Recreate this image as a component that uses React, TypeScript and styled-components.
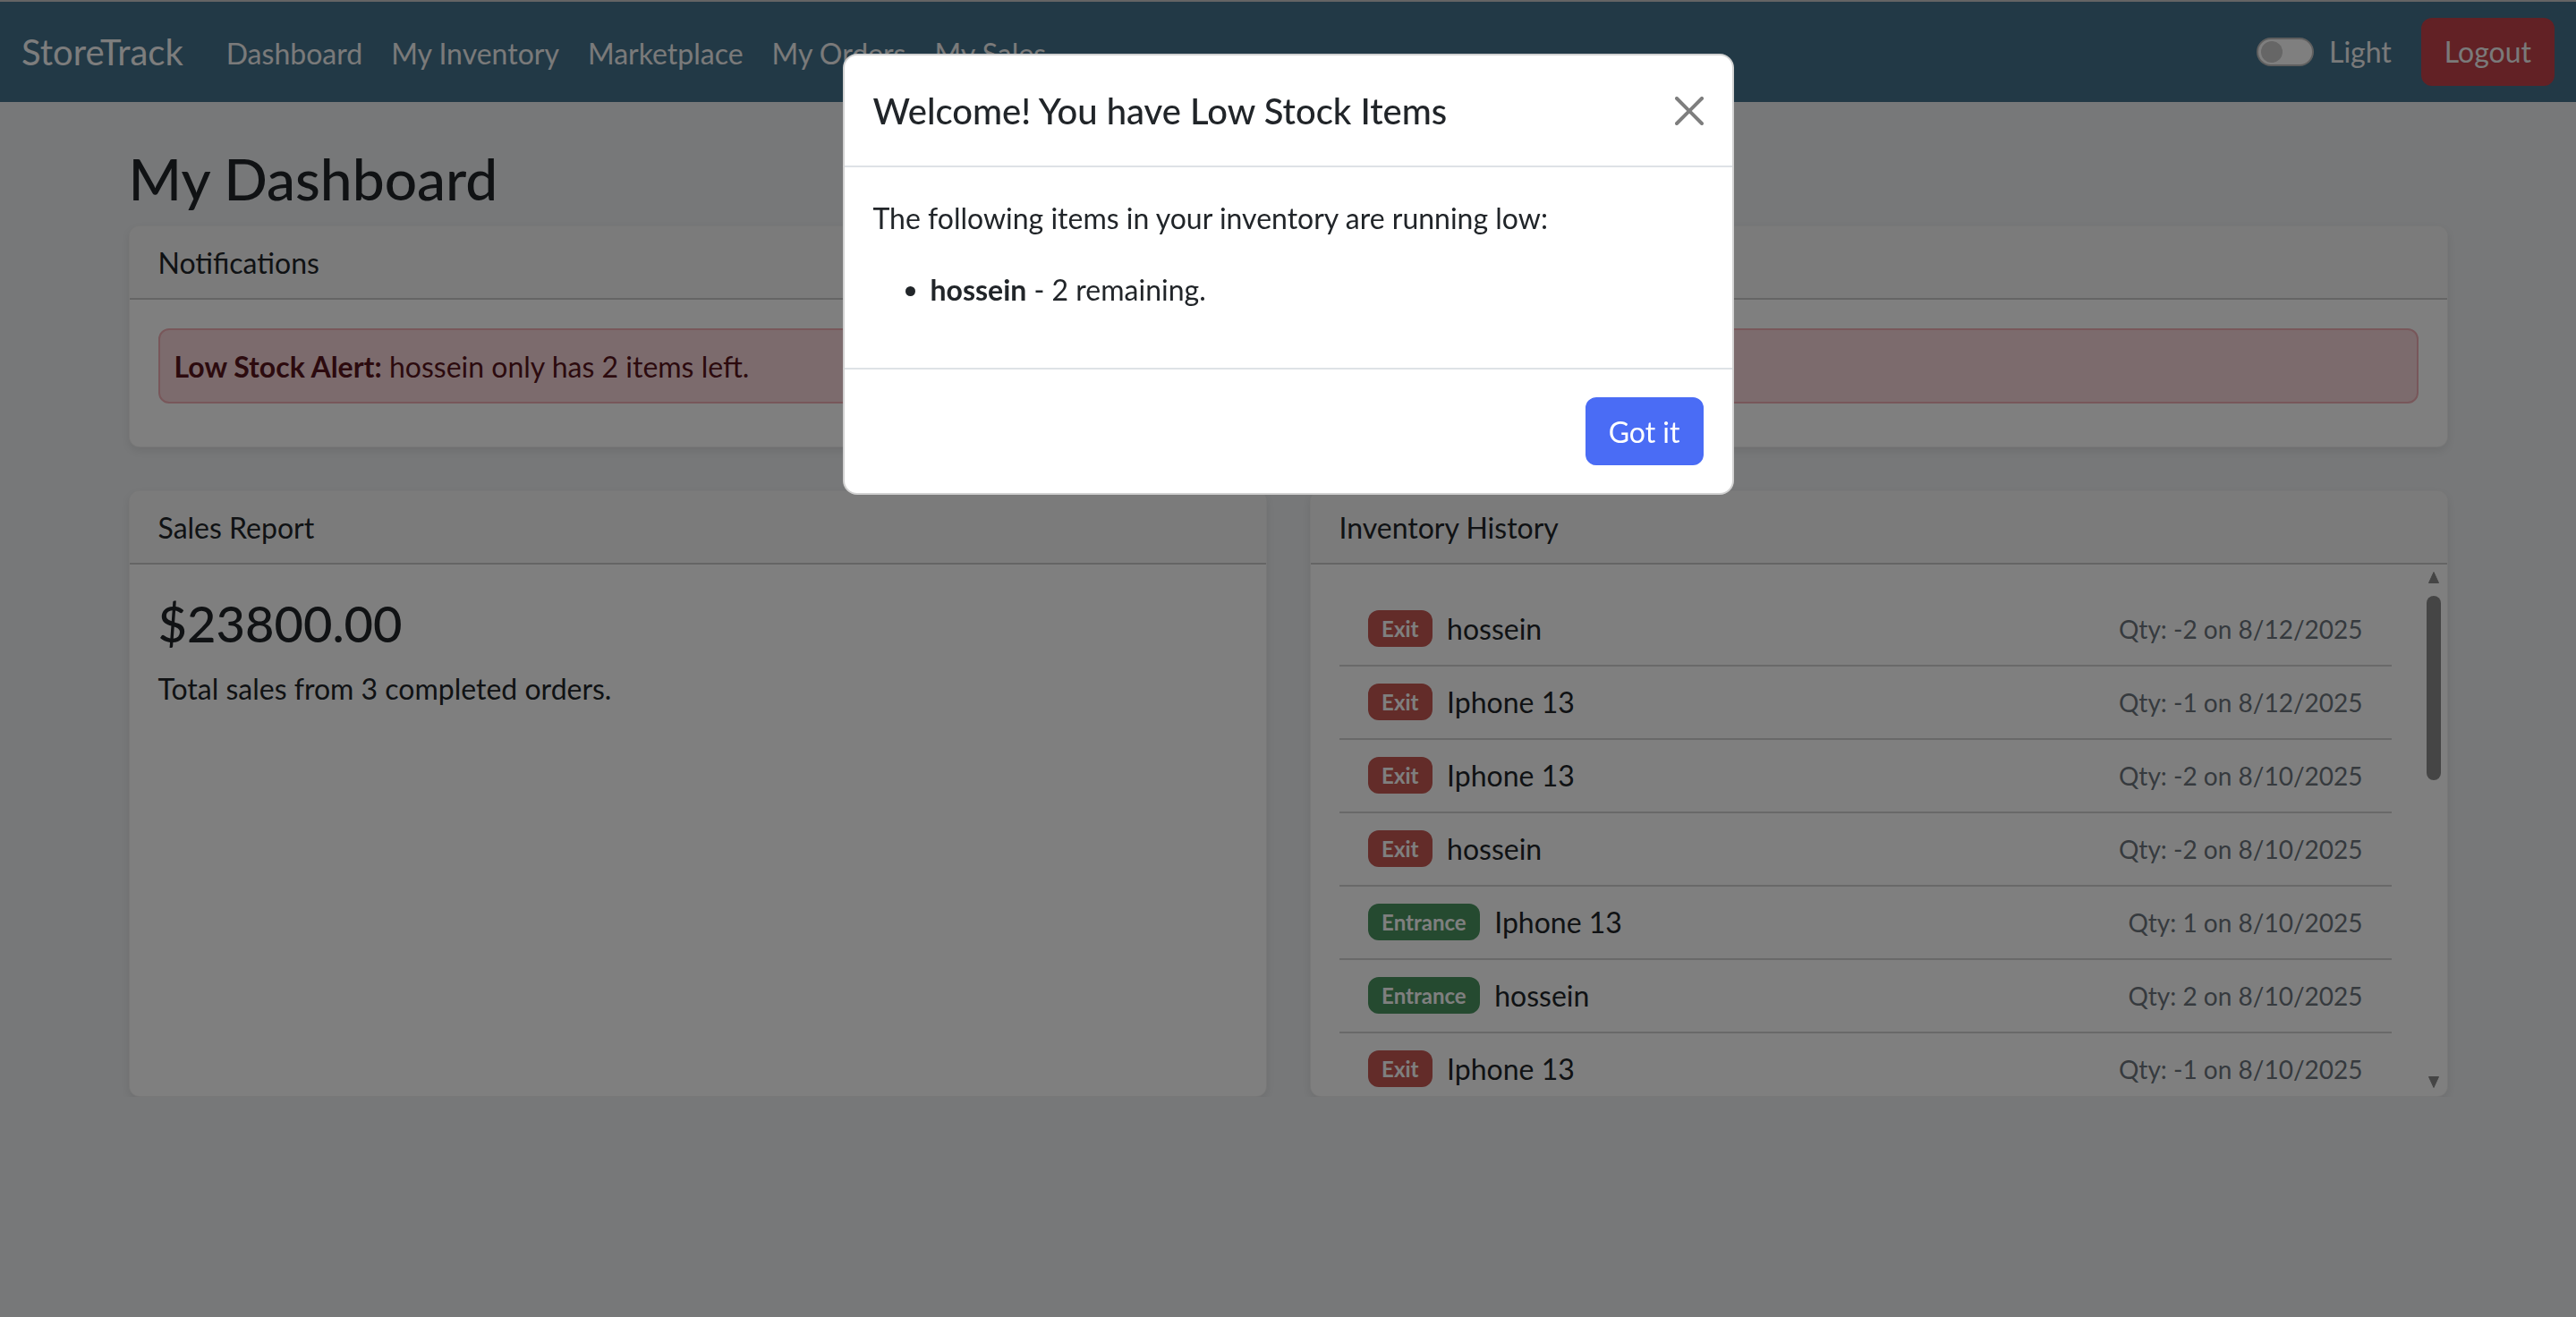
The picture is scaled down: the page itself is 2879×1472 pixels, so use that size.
import React from "react";
import styled, { createGlobalStyle } from "styled-components";

const FONT = `"Segoe UI", Lato, "Open Sans", "Noto Sans", sans-serif`;

const GlobalStyle = createGlobalStyle`
  *, *::before, *::after { box-sizing: border-box; }
  html, body { margin: 0; padding: 0; }
  body {
    background: #eef0f2;
    font-family: ${FONT};
    font-size: 32px;
    line-height: 1.5;
    color: #212529;
  }
`;

const NavBar = styled.nav`
  height: 114px;
  border-top: 2px solid #c8c8c8;
  background: #44728c;
  display: flex;
  align-items: center;
  padding: 0 24px;
`;

const Brand = styled.span`
  font-size: 40px;
  line-height: 1.5;
  color: #fafafa;
  margin-right: 32px;
`;

const NavLinks = styled.div`
  display: flex;
  align-items: center;
  flex: 1;
`;

const NavLink = styled.a`
  font-size: 32px;
  color: #f4f4f4;
  padding: 18px 16px 14px;
  text-decoration: none;
`;

const NavRight = styled.div`
  display: flex;
  align-items: center;
`;

const Switch = styled.span`
  width: 64px;
  height: 32px;
  border-radius: 16px;
  border: 2px solid rgba(0, 0, 0, 0.25);
  background: #fff;
  display: flex;
  align-items: center;
  padding: 0 3px;
`;

const Knob = styled.span`
  width: 24px;
  height: 24px;
  border-radius: 50%;
  background: #cccccc;
`;

const SwitchLabel = styled.span`
  font-size: 32px;
  color: #f4f4f4;
  margin-left: 17px;
  margin-right: 33px;
`;

const DangerButton = styled.button`
  font-family: ${FONT};
  font-size: 32px;
  line-height: 1.5;
  padding: 12px 24px;
  border: 2px solid #c4424a;
  border-radius: 12px;
  background: #c4424a;
  color: #f4f4f4;
`;

const Container = styled.main`
  max-width: 2640px;
  margin: 48px auto 0;
  padding: 0 24px;
`;

const PageTitle = styled.h2`
  font-size: 64px;
  font-weight: 500;
  line-height: 1.2;
  margin: 9px 0 13px;
  color: #212529;
`;

const Card = styled.section<{ $mb?: number }>`
  background: #fff;
  border: 1px solid rgba(0, 0, 0, 0.06);
  border-radius: 12px;
  box-shadow: 0 4px 10px rgba(0, 0, 0, 0.08);
  margin-bottom: ${(p) => p.$mb ?? 0}px;
  display: flex;
  flex-direction: column;
  overflow: hidden;
`;

const CardHeader = styled.div`
  padding: 17px 32px 15px;
  font-size: 32px;
  line-height: 1.5;
  background: rgba(0, 0, 0, 0.03);
  border-bottom: 2px solid rgba(0, 0, 0, 0.175);
`;

const CardBody = styled.div`
  padding: 32px;
`;

const ScrollBody = styled.div`
  display: flex;
  height: 594px;
`;

const ScrollView = styled.div`
  flex: 1;
  min-width: 0;
  padding: 32px;
  overflow: hidden;
`;

const Rail = styled.div`
  width: 30px;
  display: flex;
  flex-direction: column;
  align-items: center;
`;

const RailButton = styled.div`
  height: 30px;
  width: 30px;
  display: flex;
  align-items: center;
  justify-content: center;
`;

const RailTrack = styled.div`
  flex: 1;
  width: 30px;
  display: flex;
  justify-content: center;
  padding-top: 5px;
`;

const RailThumb = styled.div`
  width: 16px;
  height: 206px;
  border-radius: 8px;
  background: #8a8a8a;
`;

const Alert = styled.div`
  padding: 17px 16px 15px;
  margin-bottom: 16px;
  font-size: 32px;
  line-height: 1.5;
  background: #f8d7da;
  border: 2px solid #f1aeb5;
  border-radius: 12px;
  color: #58151c;
`;

const Row = styled.div`
  display: grid;
  grid-template-columns: 1fr 1fr;
  gap: 48px;
`;

const Amount = styled.h3`
  font-size: 56px;
  font-weight: 500;
  line-height: 1.2;
  margin: 0 0 16px;
`;

const Paragraph = styled.p`
  margin: 0;
  font-size: 32px;
  line-height: 1.5;
`;

const List = styled.ul`
  list-style: none;
  margin: 0;
  padding: 0;
`;

const ListItem = styled.li`
  display: flex;
  justify-content: space-between;
  align-items: center;
  padding: 16px 32px;
  font-size: 32px;
  line-height: 1.5;
  border-bottom: 2px solid rgba(0, 0, 0, 0.175);
  &:last-child {
    border-bottom: 0;
  }
`;

const ItemLeft = styled.div`
  display: flex;
  align-items: center;
`;

const Badge = styled.span<{ $kind: "Exit" | "Entrance" }>`
  display: inline-block;
  font-size: 24px;
  font-weight: 700;
  line-height: 1;
  padding: 8.4px 15.6px;
  border-radius: 12px;
  color: #fff;
  margin-right: 16px;
  background: ${(p) => (p.$kind === "Exit" ? "#c65852" : "#4a9460")};
`;

const Muted = styled.small`
  font-size: 28px;
  color: #6c757d;
`;

const Backdrop = styled.div`
  position: fixed;
  inset: 0;
  background: rgba(0, 0, 0, 0.5);
`;

const ModalWrap = styled.div`
  position: fixed;
  inset: 0;
  display: flex;
  justify-content: center;
  align-items: flex-start;
  padding-top: 60px;
`;

const ModalContent = styled.div`
  width: 996px;
  background: #fff;
  border: 2px solid rgba(0, 0, 0, 0.175);
  border-radius: 16px;
  display: flex;
  flex-direction: column;
`;

const ModalHeader = styled.div`
  display: flex;
  align-items: center;
  justify-content: space-between;
  padding: 32px 32px 31px;
  border-bottom: 2px solid #dee2e6;
`;

const ModalTitle = styled.h5`
  margin: 0;
  font-size: 40px;
  font-weight: 500;
  line-height: 1.5;
`;

const CloseButton = styled.button`
  width: 48px;
  height: 48px;
  padding: 8px;
  margin: -8px -8px -8px auto;
  border: 0;
  background: transparent;
  opacity: 0.5;
  display: flex;
  align-items: center;
  justify-content: center;
`;

const ModalBody = styled.div`
  padding: 33px 32px 31px;
  font-size: 32px;
  line-height: 1.5;
`;

const BodyText = styled.p`
  margin: 0 0 32px;
`;

const BulletList = styled.ul`
  margin: 0 0 32px;
  padding-left: 64px;
`;

const ModalFooter = styled.div`
  display: flex;
  justify-content: flex-end;
  padding: 23px 24px;
  border-top: 2px solid #dee2e6;
`;

const PrimaryButton = styled.button`
  margin: 8px;
  font-family: ${FONT};
  font-size: 32px;
  line-height: 1.5;
  padding: 13px 24px 11px;
  border: 2px solid #4a6cf5;
  border-radius: 12px;
  background: #4a6cf5;
  color: #fff;
`;

type Entry = { kind: "Exit" | "Entrance"; name: string; qty: number; date: string };

const history: Entry[] = [
  { kind: "Exit", name: "hossein", qty: -2, date: "8/12/2025" },
  { kind: "Exit", name: "Iphone 13", qty: -1, date: "8/12/2025" },
  { kind: "Exit", name: "Iphone 13", qty: -2, date: "8/10/2025" },
  { kind: "Exit", name: "hossein", qty: -2, date: "8/10/2025" },
  { kind: "Entrance", name: "Iphone 13", qty: 1, date: "8/10/2025" },
  { kind: "Entrance", name: "hossein", qty: 2, date: "8/10/2025" },
  { kind: "Exit", name: "Iphone 13", qty: -1, date: "8/10/2025" },
];

const navItems = ["Dashboard", "My Inventory", "Marketplace", "My Orders", "My Sales"];

export default function App() {
  return (
    <>
      <GlobalStyle />
      <NavBar>
        <Brand>StoreTrack</Brand>
        <NavLinks>
          {navItems.map((n) => (
            <NavLink key={n}>{n}</NavLink>
          ))}
        </NavLinks>
        <NavRight>
          <Switch>
            <Knob />
          </Switch>
          <SwitchLabel>Light</SwitchLabel>
          <DangerButton>Logout</DangerButton>
        </NavRight>
      </NavBar>

      <Container>
        <PageTitle>My Dashboard</PageTitle>
        <Card $mb={48}>
          <CardHeader>Notifications</CardHeader>
          <CardBody>
            <Alert>
              <strong>Low Stock Alert:</strong> hossein only has 2 items left.
            </Alert>
          </CardBody>
        </Card>

        <Row>
          <Card>
            <CardHeader>Sales Report</CardHeader>
            <CardBody>
              <Amount>$23800.00</Amount>
              <Paragraph>Total sales from 3 completed orders.</Paragraph>
            </CardBody>
          </Card>
          <Card>
            <CardHeader>Inventory History</CardHeader>
            <ScrollBody>
              <ScrollView>
                <List>
                  {history.map((h, i) => (
                    <ListItem key={i}>
                      <ItemLeft>
                        <Badge $kind={h.kind}>{h.kind}</Badge>
                        {h.name}
                      </ItemLeft>
                      <Muted>
                        Qty: {h.qty} on {h.date}
                      </Muted>
                    </ListItem>
                  ))}
                </List>
              </ScrollView>
              <Rail>
                <RailButton>
                  <svg width="12" height="13" viewBox="0 0 12 13">
                    <path d="M6 0.5 L11.5 12.5 L0.5 12.5 Z" fill="#8a8a8a" stroke="#8a8a8a" strokeLinejoin="round" />
                  </svg>
                </RailButton>
                <RailTrack>
                  <RailThumb />
                </RailTrack>
                <RailButton>
                  <svg width="12" height="13" viewBox="0 0 12 13">
                    <path d="M0.5 0.5 L11.5 0.5 L6 12.5 Z" fill="#8a8a8a" stroke="#8a8a8a" strokeLinejoin="round" />
                  </svg>
                </RailButton>
              </Rail>
            </ScrollBody>
          </Card>
        </Row>
      </Container>

      <Backdrop />
      <ModalWrap>
        <ModalContent>
          <ModalHeader>
            <ModalTitle>Welcome! You have Low Stock Items</ModalTitle>
            <CloseButton aria-label="Close">
              <svg width="32" height="32" viewBox="0 0 16 16" fill="#000">
                <path d="M.293.293a1 1 0 0 1 1.414 0L8 6.586 14.293.293a1 1 0 1 1 1.414 1.414L9.414 8l6.293 6.293a1 1 0 0 1-1.414 1.414L8 9.414l-6.293 6.293a1 1 0 0 1-1.414-1.414L6.586 8 .293 1.707a1 1 0 0 1 0-1.414z" />
              </svg>
            </CloseButton>
          </ModalHeader>
          <ModalBody>
            <BodyText>The following items in your inventory are running low:</BodyText>
            <BulletList>
              <li>
                <strong>hossein</strong> - 2 remaining.
              </li>
            </BulletList>
          </ModalBody>
          <ModalFooter>
            <PrimaryButton>Got it</PrimaryButton>
          </ModalFooter>
        </ModalContent>
      </ModalWrap>
    </>
  );
}
